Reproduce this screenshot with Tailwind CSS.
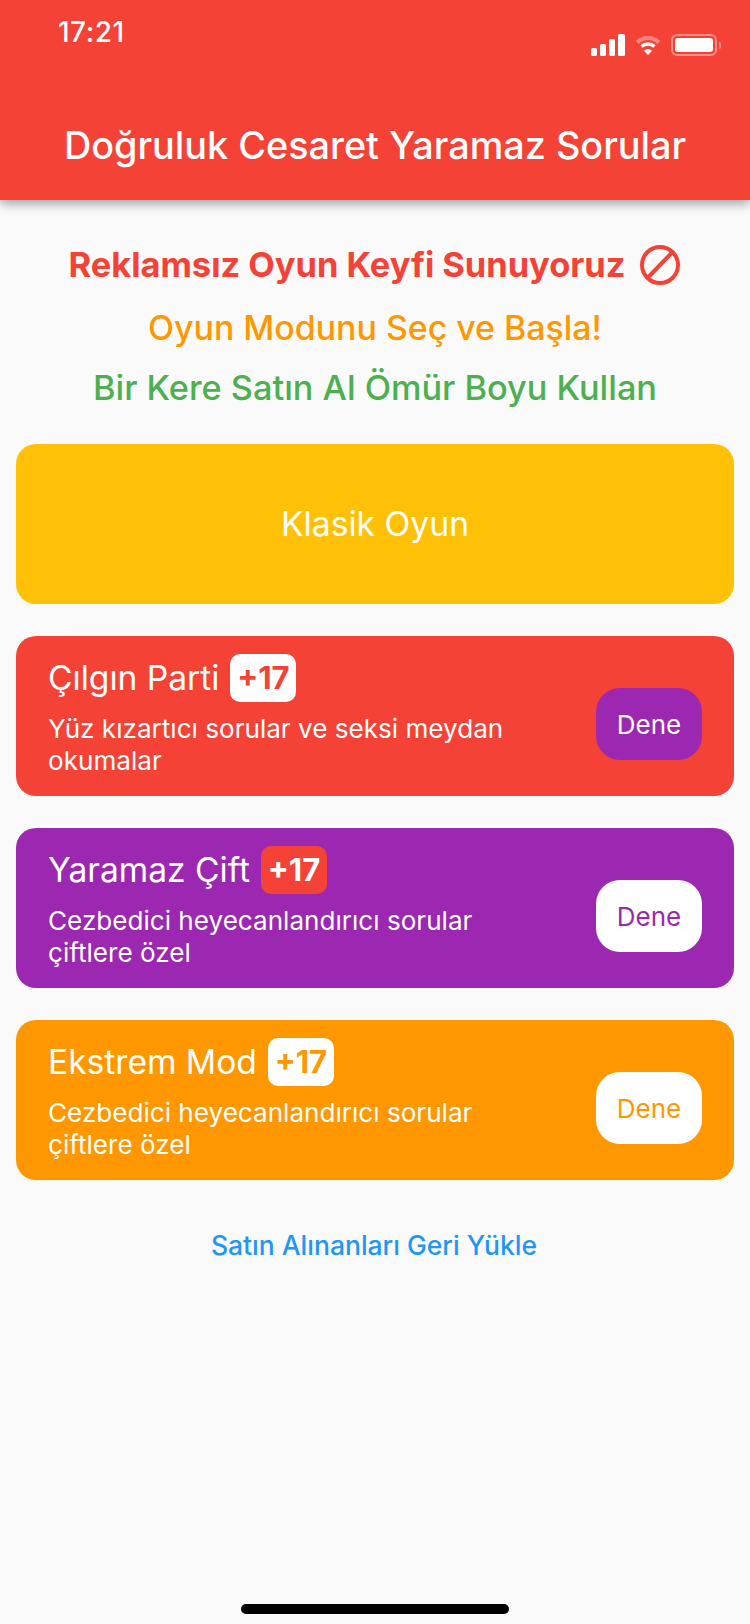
<!DOCTYPE html>
<html lang="tr">
<head>
    <meta charset="UTF-8">
    <meta name="viewport" content="width=device-width, initial-scale=1.0">
    <title>Doğruluk Cesaret Yaramaz Sorular</title>
    <script src="https://cdn.jsdelivr.net/npm/@tailwindcss/browser@4"></script>
</head>
<body class="bg-[#fafafa] font-['Inter',sans-serif]">
    <div class="relative w-[750px] h-[1624px] overflow-hidden flex flex-col">
        <!-- header -->
        <header class="h-[200px] bg-[#f44336] text-white shadow-[0_4px_10px_rgba(0,0,0,0.35)] flex flex-col shrink-0">
            <div class="h-[100px] pl-[58px] pr-[29px] flex justify-between">
                <span class="text-[28px] leading-[34px] mt-[15px] font-medium tracking-[0.5px]">17:21</span>
                <div class="flex items-center gap-[9px] mt-[28px] h-[34px]">
                    <svg width="35" height="22" viewBox="0 0 35 22" fill="#fff">
                        <rect x="0" y="14" width="6" height="8" rx="1.5"/>
                        <rect x="9" y="10" width="6" height="12" rx="1.5"/>
                        <rect x="18" y="5" width="6" height="17" rx="1.5"/>
                        <rect x="27" y="0" width="7" height="22" rx="1.5"/>
                    </svg>
                    <svg width="26" height="20" viewBox="0 0 26 20" fill="none" stroke-linecap="butt">
                        <path d="M2 7.5a16 16 0 0 1 22 0" stroke="#fff" stroke-opacity="0.35" stroke-width="4"/>
                        <path d="M6.5 11.5a9.5 9.5 0 0 1 13 0" stroke="#fff" stroke-width="3.4"/>
                        <path d="M13 20l-4-4.2a5.6 5.6 0 0 1 8 0z" fill="#fff"/>
                    </svg>
                    <div class="flex items-center gap-[2px] ml-[1px]">
                        <div class="w-[46px] h-[22px] rounded-[6px] border-2 border-white/40 p-[2px]">
                            <div class="w-full h-full bg-white rounded-[3px]"></div>
                        </div>
                        <div class="w-[2px] h-[7px] bg-white/40 rounded-r-sm"></div>
                    </div>
                </div>
            </div>
            <h1 class="text-[37.8px] leading-[44px] mt-[23px] text-center font-medium">Doğruluk Cesaret Yaramaz Sorular</h1>
        </header>

        <main class="flex flex-col flex-1">
            <div class="flex items-center justify-center gap-[14px] mt-[43px] h-[44px]">
                <span class="text-[34.4px] leading-[44px] font-bold text-[#f44336]">Reklamsız Oyun Keyfi Sunuyoruz</span>
                <svg width="42" height="42" viewBox="0 0 42 42" fill="none" stroke="#f44336" stroke-width="4">
                    <circle cx="21" cy="21" r="18"/>
                    <path d="M8.5 34L33.5 8"/>
                </svg>
            </div>
            <p class="text-[33.9px] leading-[44px] mt-[19px] font-medium text-center text-[#ff9800]">Oyun Modunu Seç ve Başla!</p>
            <p class="text-[34.3px] leading-[44px] mt-[16px] font-medium text-center text-[#4caf50]">Bir Kere Satın Al Ömür Boyu Kullan</p>

            <div class="px-4 mt-[34px] flex flex-col gap-[32px]">
                <div class="h-[160px] rounded-[20px] bg-[#ffc107] flex items-center justify-center text-white text-[33.7px]">Klasik Oyun</div>

                <div class="h-[160px] rounded-[20px] bg-[#f44336] text-white pl-[32px] pr-[32px] flex items-start justify-between">
                    <div class="w-[490px] pt-[18px]">
                        <div class="flex items-center gap-[11px]">
                            <span class="text-[33.6px] leading-[48px]">Çılgın Parti</span>
                            <span class="h-[48px] w-[66px] text-center rounded-[10px] bg-white text-[#f44336] text-[31px] leading-[48px] font-bold">+17</span>
                        </div>
                        <p class="text-[26.1px] leading-[32px] mt-[11px]">Yüz kızartıcı sorular ve seksi meydan okumalar</p>
                    </div>
                    <div class="w-[106px] h-[72px] mt-[52px] rounded-[24px] bg-[#9c27b0] flex items-center justify-center text-[26px]">Dene</div>
                </div>

                <div class="h-[160px] rounded-[20px] bg-[#9c27b0] text-white pl-[32px] pr-[32px] flex items-start justify-between">
                    <div class="w-[490px] pt-[18px]">
                        <div class="flex items-center gap-[11px]">
                            <span class="text-[33.6px] leading-[48px]">Yaramaz Çift</span>
                            <span class="h-[48px] w-[66px] text-center rounded-[10px] bg-[#f44336] text-white text-[31px] leading-[48px] font-bold">+17</span>
                        </div>
                        <p class="text-[26.1px] leading-[32px] mt-[11px] w-[440px]">Cezbedici heyecanlandırıcı sorular çiftlere özel</p>
                    </div>
                    <div class="w-[106px] h-[72px] mt-[52px] rounded-[24px] bg-white text-[#9c27b0] flex items-center justify-center text-[26px]">Dene</div>
                </div>

                <div class="h-[160px] rounded-[20px] bg-[#ff9800] text-white pl-[32px] pr-[32px] flex items-start justify-between">
                    <div class="w-[490px] pt-[18px]">
                        <div class="flex items-center gap-[11px]">
                            <span class="text-[33.6px] leading-[48px]">Ekstrem Mod</span>
                            <span class="h-[48px] w-[66px] text-center rounded-[10px] bg-white text-[#ff9800] text-[31px] leading-[48px] font-bold">+17</span>
                        </div>
                        <p class="text-[26.1px] leading-[32px] mt-[11px] w-[440px]">Cezbedici heyecanlandırıcı sorular çiftlere özel</p>
                    </div>
                    <div class="w-[106px] h-[72px] mt-[52px] rounded-[24px] bg-white text-[#ff9800] flex items-center justify-center text-[26px]">Dene</div>
                </div>
            </div>

            <p class="text-[26.5px] leading-[32px] mt-[49px] pr-[2px] font-medium text-center text-[#2196f3]">Satın Alınanları Geri Yükle</p>
        </main>

        <!-- home indicator -->
        <div class="absolute bottom-[10px] left-[241px] w-[268px] h-[10px] rounded-full bg-black"></div>
    </div>
</body>
</html>
